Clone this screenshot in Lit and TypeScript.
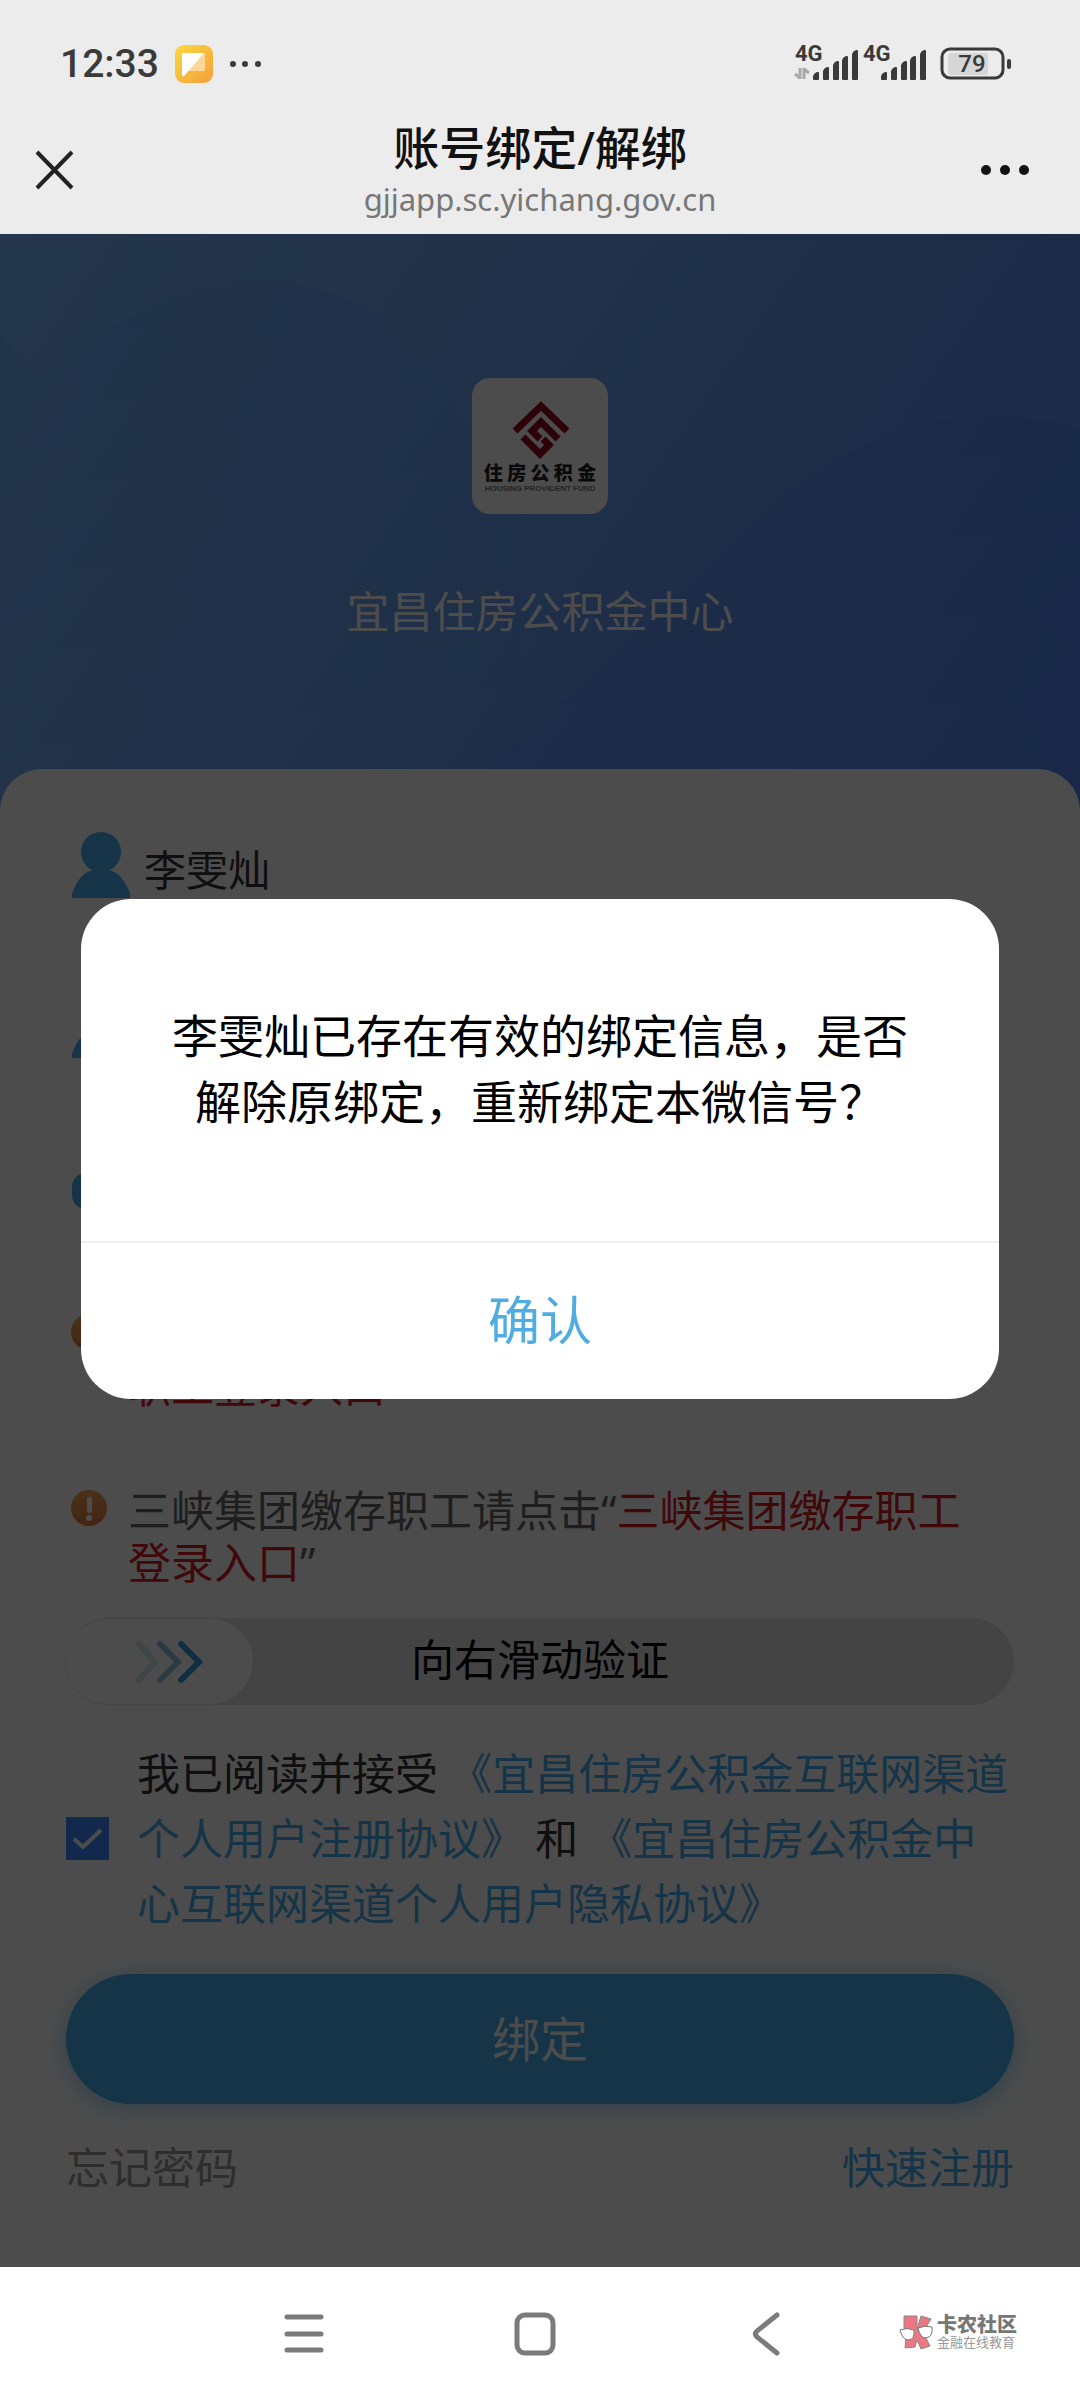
import { LitElement, html, css, svg } from "lit";
import { customElement, property, state } from "lit/decorators.js";

@customElement("status-bar")
class StatusBar extends LitElement {
  static styles = css`
    :host {
      display: flex;
      align-items: center;
      justify-content: space-between;
      height: 120px;
      padding: 8px 68px 0 60px;
      box-sizing: border-box;
      color: #3a3a3a;
      font-family: Roboto, "Noto Sans", sans-serif;
    }
    .group {
      display: flex;
      align-items: center;
    }
    .time {
      font-size: 39px;
      line-height: 48px;
      font-weight: 500;
    }
    .app {
      margin-left: 16px;
    }
    .dots {
      margin-left: 16px;
    }
    .battery {
      margin-left: 12px;
    }
    svg {
      display: block;
    }
    text {
      font-family: Roboto, "Noto Sans", sans-serif;
      font-weight: 700;
      fill: #3a3a3a;
    }
    .level {
      font-weight: 500;
    }
  `;

  private bars(x: number) {
    return [7, 12, 18, 23, 29].map(
      (h, i) =>
        svg`<path fill="#3a3a3a" d=${`M${x + i * 10 - (i > 2 ? 1 : 0)} ${34}v${-(h - 4)}q1 -3 4 -4h1q1 0 1 1v${h - 1}q0 1 -1 1h-4q-1 0 -1 -1z`}></path>`
    );
  }

  render() {
    return html`
      <div class="group">
        <span class="time">12:33</span>
        <svg class="app" width="38" height="38" viewBox="0 0 38 38">
          <defs>
            <linearGradient id="amber" x1="0" y1="0" x2="1" y2="1">
              <stop offset="0" stop-color="#fbd83c"></stop>
              <stop offset="1" stop-color="#f59f3e"></stop>
            </linearGradient>
          </defs>
          <rect width="38" height="38" rx="9" fill="url(#amber)"></rect>
          <path d="M7 8h23v16q0 2 -2 2H12z" fill="#fbd79a"></path>
          <path d="M7 9q0 -1 1 -1H29L9 31q-2 1 -2 -1z" fill="#fff"></path>
        </svg>
        <svg class="dots" width="34" height="8" viewBox="0 0 34 8" fill="#3a3a3a">
          <circle cx="4" cy="4" r="3"></circle>
          <circle cx="16" cy="4" r="3"></circle>
          <circle cx="29" cy="4" r="3"></circle>
        </svg>
      </div>
      <div class="group">
        <svg width="134" height="58" viewBox="0 -10 134 58">
          <text x="1" y="16" font-size="22">4G</text>
          <text x="69" y="16" font-size="22">4G</text>
          <path d="M6 23v11M1 29l5 4M10 34v-11M10 24l5 4" stroke="#a8a8a8" stroke-width="3" fill="none"></path>
          ${this.bars(19)} ${this.bars(87)}
        </svg>
        <svg class="battery" width="72" height="34" viewBox="0 0 72 34">
          <rect x="8" y="6" width="40" height="22" rx="3" fill="#d6d6d6"></rect>
          <rect x="2" y="2" width="61" height="29" rx="8" fill="none" stroke="#3a3a3a" stroke-width="3"></rect>
          <rect x="67" y="12" width="4" height="10" rx="2" fill="#3a3a3a"></rect>
          <text class="level" x="32" y="25" font-size="24" text-anchor="middle">79</text>
        </svg>
      </div>
    `;
  }
}

@customElement("title-bar")
class TitleBar extends LitElement {
  static styles = css`
    :host {
      display: grid;
      grid-template-columns: 96px 1fr 96px;
      align-items: start;
      height: 114px;
      padding: 0 34px;
      box-sizing: border-box;
    }
    .heading {
      display: flex;
      flex-direction: column;
      align-items: center;
    }
    h1 {
      margin: 0;
      font-size: 46px;
      line-height: 54px;
      font-weight: 500;
      color: #111;
    }
    .host {
      font-size: 31px;
      line-height: 50px;
      color: #777;
    }
    button {
      display: flex;
      align-items: center;
      height: 100px;
      padding: 0;
      border: 0;
      background: none;
    }
    .more {
      justify-content: flex-end;
      padding-right: 16px;
    }
  `;

  render() {
    return html`
      <button aria-label="关闭">
        <svg width="40" height="40" viewBox="0 0 40 40" stroke="#222" stroke-width="4" fill="none">
          <path d="M3 2L38 38M38 2L3 38"></path>
        </svg>
      </button>
      <div class="heading">
        <h1>账号绑定/解绑</h1>
        <span class="host">gjjapp.sc.yichang.gov.cn</span>
      </div>
      <button class="more" aria-label="更多">
        <svg width="50" height="12" viewBox="0 0 50 12" fill="#111">
          <circle cx="6" cy="6" r="5"></circle>
          <circle cx="25" cy="6" r="5"></circle>
          <circle cx="44" cy="6" r="5"></circle>
        </svg>
      </button>
    `;
  }
}

@customElement("fund-hero")
class FundHero extends LitElement {
  static styles = css`
    :host {
      display: block;
      position: relative;
      height: 577px;
      background: linear-gradient(125deg, #7bb7fb 0%, #6ca2f4 45%, #6094f2 70%, #588af3 100%);
    }
    .waves {
      position: absolute;
      inset: 0;
      width: 100%;
      height: 100%;
    }
    .content {
      position: relative;
      display: flex;
      flex-direction: column;
      align-items: center;
      gap: 72px;
      padding-top: 144px;
    }
    .name {
      font-size: 43px;
      line-height: 52px;
      color: #fff;
    }
    .brand {
      font-family: "Noto Sans CJK SC", sans-serif;
      font-weight: 900;
      fill: #222;
    }
    .latin {
      font-family: "Liberation Sans", sans-serif;
      font-weight: 700;
      fill: #777;
    }
  `;

  render() {
    return html`
      <svg class="waves" viewBox="0 0 1080 576" preserveAspectRatio="none" aria-hidden="true">
        <defs>
          <linearGradient id="hill" x1="0" y1="0" x2="0" y2="1">
            <stop offset="0" stop-color="#4a86e8" stop-opacity=".14"></stop>
            <stop offset="1" stop-color="#4a86e8" stop-opacity="0"></stop>
          </linearGradient>
          <linearGradient id="ridge" x1="0" y1="0" x2="0" y2="1">
            <stop offset="0" stop-color="#4374ea" stop-opacity=".24"></stop>
            <stop offset="1" stop-color="#4374ea" stop-opacity=".1"></stop>
          </linearGradient>
        </defs>
        <path d="M0 100L46 155Q130 50 260 46Q380 50 440 150L520 250V576H0z" fill="url(#hill)"></path>
        <path d="M440 576Q640 400 740 300Q860 190 970 182Q1040 180 1080 195V576z" fill="url(#ridge)"></path>
      </svg>
      <div class="content">
        <svg width="136" height="136" viewBox="0 0 136 136" role="img" aria-label="住房公积金">
          <rect width="136" height="136" rx="18" fill="#fff"></rect>
          <g fill="none" stroke="#96001f" stroke-width="7">
            <path d="M43 53L69 28L95 53"></path>
            <path d="M51 59L68 76L77 67L71 61"></path>
            <path d="M86 61L69 44L60 53L68 61"></path>
          </g>
          <text class="brand" x="68" y="102" font-size="19" text-anchor="middle">住 房 公 积 金</text>
          <text class="latin" x="68" y="113" font-size="8" text-anchor="middle">HOUSING PROVIDENT FUND</text>
        </svg>
        <span class="name">宜昌住房公积金中心</span>
      </div>
    `;
  }
}

@customElement("notice-line")
class NoticeLine extends LitElement {
  @property() audience = "";
  @property() target = "";

  static styles = css`
    :host {
      display: grid;
      grid-template-columns: 37px 1fr;
      column-gap: 20px;
      padding: 0 32px 0 5px;
      font-size: 43px;
      line-height: 52px;
      color: #666;
    }
    svg {
      margin-top: 5px;
    }
    p {
      margin: 0;
    }
    a {
      color: #d8201f;
      text-decoration: none;
    }
  `;

  render() {
    return html`
      <svg width="37" height="37" viewBox="0 0 37 37" aria-hidden="true">
        <defs>
          <linearGradient id="warm" x1="0" y1="0" x2="0" y2="1">
            <stop offset="0" stop-color="#f2a55a"></stop>
            <stop offset="1" stop-color="#e27c3c"></stop>
          </linearGradient>
        </defs>
        <circle cx="18" cy="18" r="18" fill="url(#warm)"></circle>
        <rect x="16" y="7" width="5" height="16" rx="2" fill="#fff"></rect>
        <circle cx="18" cy="28" r="3" fill="#fff"></circle>
      </svg>
      <p>${this.audience}请点击“<a href="#entry">${this.target}</a>”</p>
    `;
  }
}

@customElement("binding-form")
class BindingForm extends LitElement {
  @state() private accepted = true;

  static styles = css`
    :host {
      display: block;
      position: relative;
      margin-top: -42px;
      padding: 63px 66px 64px;
      border-radius: 42px 42px 0 0;
      background: #fff;
    }
    .field {
      display: flex;
      align-items: center;
      gap: 14px;
      height: 66px;
      margin-bottom: 94px;
      padding-left: 6px;
    }
    .field svg {
      flex: none;
    }
    .field input {
      flex: 1;
      min-width: 0;
      height: 66px;
      padding: 4px 0 0;
      box-sizing: border-box;
      border: 0;
      outline: 0;
      background: none;
      font: inherit;
      font-size: 42px;
      color: #333;
    }
    .identity {
      margin-bottom: 100px;
    }
    .secret {
      margin-bottom: 85px;
    }
    notice-line {
      margin-bottom: 72px;
    }
    .last {
      margin-bottom: 29px;
    }
    .slider {
      display: grid;
      grid-template-columns: 187px 1fr 187px;
      align-items: center;
      height: 87px;
      border-radius: 44px;
      background: #e3e3e3;
      font-size: 43px;
      line-height: 52px;
      text-align: center;
      color: #000;
    }
    .slider span {
      padding-bottom: 4px;
    }
    .thumb {
      display: grid;
      place-items: center;
      height: 85px;
      padding: 0 0 0 18px;
      border: 0;
      border-radius: 44px;
      background: #fff;
      box-shadow: 0 0 3px #ddd;
    }
    .terms {
      display: grid;
      grid-template-columns: 43px 1fr;
      column-gap: 28px;
      align-items: center;
      margin-top: 36px;
      font-size: 43px;
      line-height: 65px;
      color: #333;
    }
    .terms input {
      appearance: none;
      width: 43px;
      height: 43px;
      margin: 0;
      grid-area: 1 / 1;
      background: #fff;
    }
    .terms input:checked {
      background: #3d86ff;
    }
    .tick {
      grid-area: 1 / 1;
      pointer-events: none;
    }
    .terms label {
      grid-area: 1 / 2;
    }
    a {
      color: #46adee;
      text-decoration: none;
    }
    .submit {
      display: block;
      width: 100%;
      height: 130px;
      margin-top: 38px;
      padding: 0 0 6px;
      border: 0;
      border-radius: 65px;
      background: #46adee;
      box-shadow: 0 4px 24px #46adee88;
      color: #fff;
      font: inherit;
      font-size: 48px;
    }
    .links {
      display: flex;
      justify-content: space-between;
      margin-top: 36px;
      font-size: 43px;
      line-height: 56px;
    }
    .forgot {
      color: #999;
    }
  `;

  private person() {
    return html`
      <svg width="58" height="66" viewBox="0 0 58 66" fill="#46adee" aria-hidden="true">
        <ellipse cx="29" cy="20" rx="20" ry="20"></ellipse>
        <path d="M0 66V62Q8 39 23 38H35Q50 39 58 62V66z"></path>
      </svg>
    `;
  }

  render() {
    return html`
      <div class="field">
        ${this.person()}
        <input aria-label="姓名" value="李雯灿" />
      </div>
      <div class="field identity">
        ${this.person()}
        <input aria-label="证件号码" />
      </div>
      <div class="field secret">
        <svg width="58" height="36" viewBox="0 0 58 36" fill="#46adee" aria-hidden="true">
          <rect width="58" height="36" rx="14"></rect>
        </svg>
        <input aria-label="密码" type="password" />
      </div>
      <notice-line audience="灵活就业人员缴存" target="灵活就业人员缴存职工登录入口"></notice-line>
      <notice-line class="last" audience="三峡集团缴存职工" target="三峡集团缴存职工登录入口"></notice-line>
      <div class="slider">
        <button class="thumb" aria-label="滑块">
          <svg width="68" height="44" viewBox="0 0 68 44" fill="none" stroke-width="6" stroke-linecap="round">
            <path d="M4 4L20 22L4 40" stroke="#d3eaf2"></path>
            <path d="M25 4L43 22L25 40" stroke="#8fc6dc"></path>
            <path d="M46 4L64 22L46 40" stroke="#2f9bdc"></path>
          </svg>
        </button>
        <span>向右滑动验证</span>
      </div>
      <div class="terms">
        <input
          id="accept"
          type="checkbox"
          .checked=${this.accepted}
          @change=${(e: Event) => (this.accepted = (e.target as HTMLInputElement).checked)}
        />
        <svg class="tick" width="43" height="43" viewBox="0 0 43 43" fill="none" stroke="#fff" stroke-width="4">
          <path d="M8 22L17 30L35 13"></path>
        </svg>
        <label for="accept"
          >我已阅读并接受 <a href="#register-terms">《宜昌住房公积金互联网渠道个人用户注册协议》</a> 和
          <a href="#privacy-terms">《宜昌住房公积金中心互联网渠道个人用户隐私协议》</a></label
        >
      </div>
      <button class="submit">绑定</button>
      <div class="links">
        <a class="forgot" href="#forgot">忘记密码</a>
        <a href="#register">快速注册</a>
      </div>
    `;
  }
}

@customElement("confirm-dialog")
class ConfirmDialog extends LitElement {
  static styles = css`
    :host {
      position: absolute;
      inset: 0;
      display: flex;
      justify-content: center;
      align-items: flex-start;
      padding-top: 665px;
      box-sizing: border-box;
      background: rgba(0, 0, 0, 0.7);
    }
    .panel {
      width: 85%;
      border-radius: 50px;
      overflow: hidden;
      background: #fff;
      text-align: center;
    }
    p {
      margin: 0;
      padding: 103px 88px 107px;
      font-size: 46px;
      line-height: 66px;
      color: #000;
    }
    button {
      display: block;
      width: 100%;
      height: 158px;
      padding: 0 0 8px;
      border: 0;
      border-top: 2px solid #f0f0f0;
      background: none;
      color: #4fade2;
      font: inherit;
      font-size: 52px;
    }
  `;

  render() {
    return html`
      <div class="panel" role="dialog" aria-modal="true">
        <p>李雯灿已存在有效的绑定信息，是否解除原绑定，重新绑定本微信号？</p>
        <button>确认</button>
      </div>
    `;
  }
}

@customElement("system-nav")
class SystemNav extends LitElement {
  static styles = css`
    :host {
      display: grid;
      grid-template-columns: 188fr 231fr 231fr 231fr 199fr;
      align-items: center;
      height: 133px;
      background: #fff;
    }
    button {
      display: grid;
      place-items: center;
      height: 96px;
      border: 0;
      background: none;
    }
    .spare {
      grid-column: 1;
    }
    .mark {
      display: flex;
      align-items: center;
      gap: 4px;
      padding: 0 0 4px 18px;
    }
    .words {
      display: flex;
      flex-direction: column;
      color: #777;
      white-space: nowrap;
    }
    .big {
      font-size: 20px;
      line-height: 20px;
      font-weight: 900;
    }
    .small {
      font-size: 13px;
      line-height: 14px;
      color: #999;
    }
  `;

  render() {
    return html`
      <span class="spare"></span>
      <button aria-label="最近任务">
        <svg width="40" height="42" viewBox="0 0 40 42" stroke="#7b7b7b" stroke-width="5" stroke-linecap="round">
          <path d="M3 4H37M3 21H37M3 37H37"></path>
        </svg>
      </button>
      <button aria-label="主屏幕">
        <svg width="42" height="44" viewBox="0 0 42 44" fill="none" stroke="#7b7b7b" stroke-width="5">
          <rect x="3" y="3" width="36" height="38" rx="8"></rect>
        </svg>
      </button>
      <button aria-label="返回">
        <svg width="30" height="44" viewBox="0 0 30 44" fill="none" stroke="#7b7b7b" stroke-width="5" stroke-linecap="round">
          <path d="M26 3L6 19Q3 22 6 25L26 41"></path>
        </svg>
      </button>
      <div class="mark">
        <svg width="34" height="36" viewBox="0 0 34 36" aria-hidden="true">
          <g fill="#ec7681" stroke="#888" stroke-width="1">
            <path d="M5 2H18V15L22 2L32 5L24 18L31 32L22 35L18 26L16 33L6 34L7 24L5 14z"></path>
          </g>
          <g fill="#fff" stroke="#777" stroke-width="1">
            <path d="M1 16Q8 13 15 16Q16 26 9 26Q3 25 1 16z"></path>
            <path d="M19 14Q26 11 33 13Q34 23 27 24Q21 24 19 14z"></path>
          </g>
        </svg>
        <div class="words">
          <span class="big">卡农社区</span>
          <span class="small">金融在线教育</span>
        </div>
      </div>
    `;
  }
}

@customElement("app-root")
class AppRoot extends LitElement {
  static styles = css`
    :host {
      display: flex;
      flex-direction: column;
      min-height: 100vh;
      background: #ececec;
      font-family: "Noto Sans", "Noto Sans CJK SC", sans-serif;
    }
    main {
      position: relative;
      flex: 1;
      background: #fff;
    }
  `;

  render() {
    return html`
      <status-bar></status-bar>
      <title-bar></title-bar>
      <main>
        <fund-hero></fund-hero>
        <binding-form></binding-form>
        <confirm-dialog></confirm-dialog>
      </main>
      <system-nav></system-nav>
    `;
  }
}
